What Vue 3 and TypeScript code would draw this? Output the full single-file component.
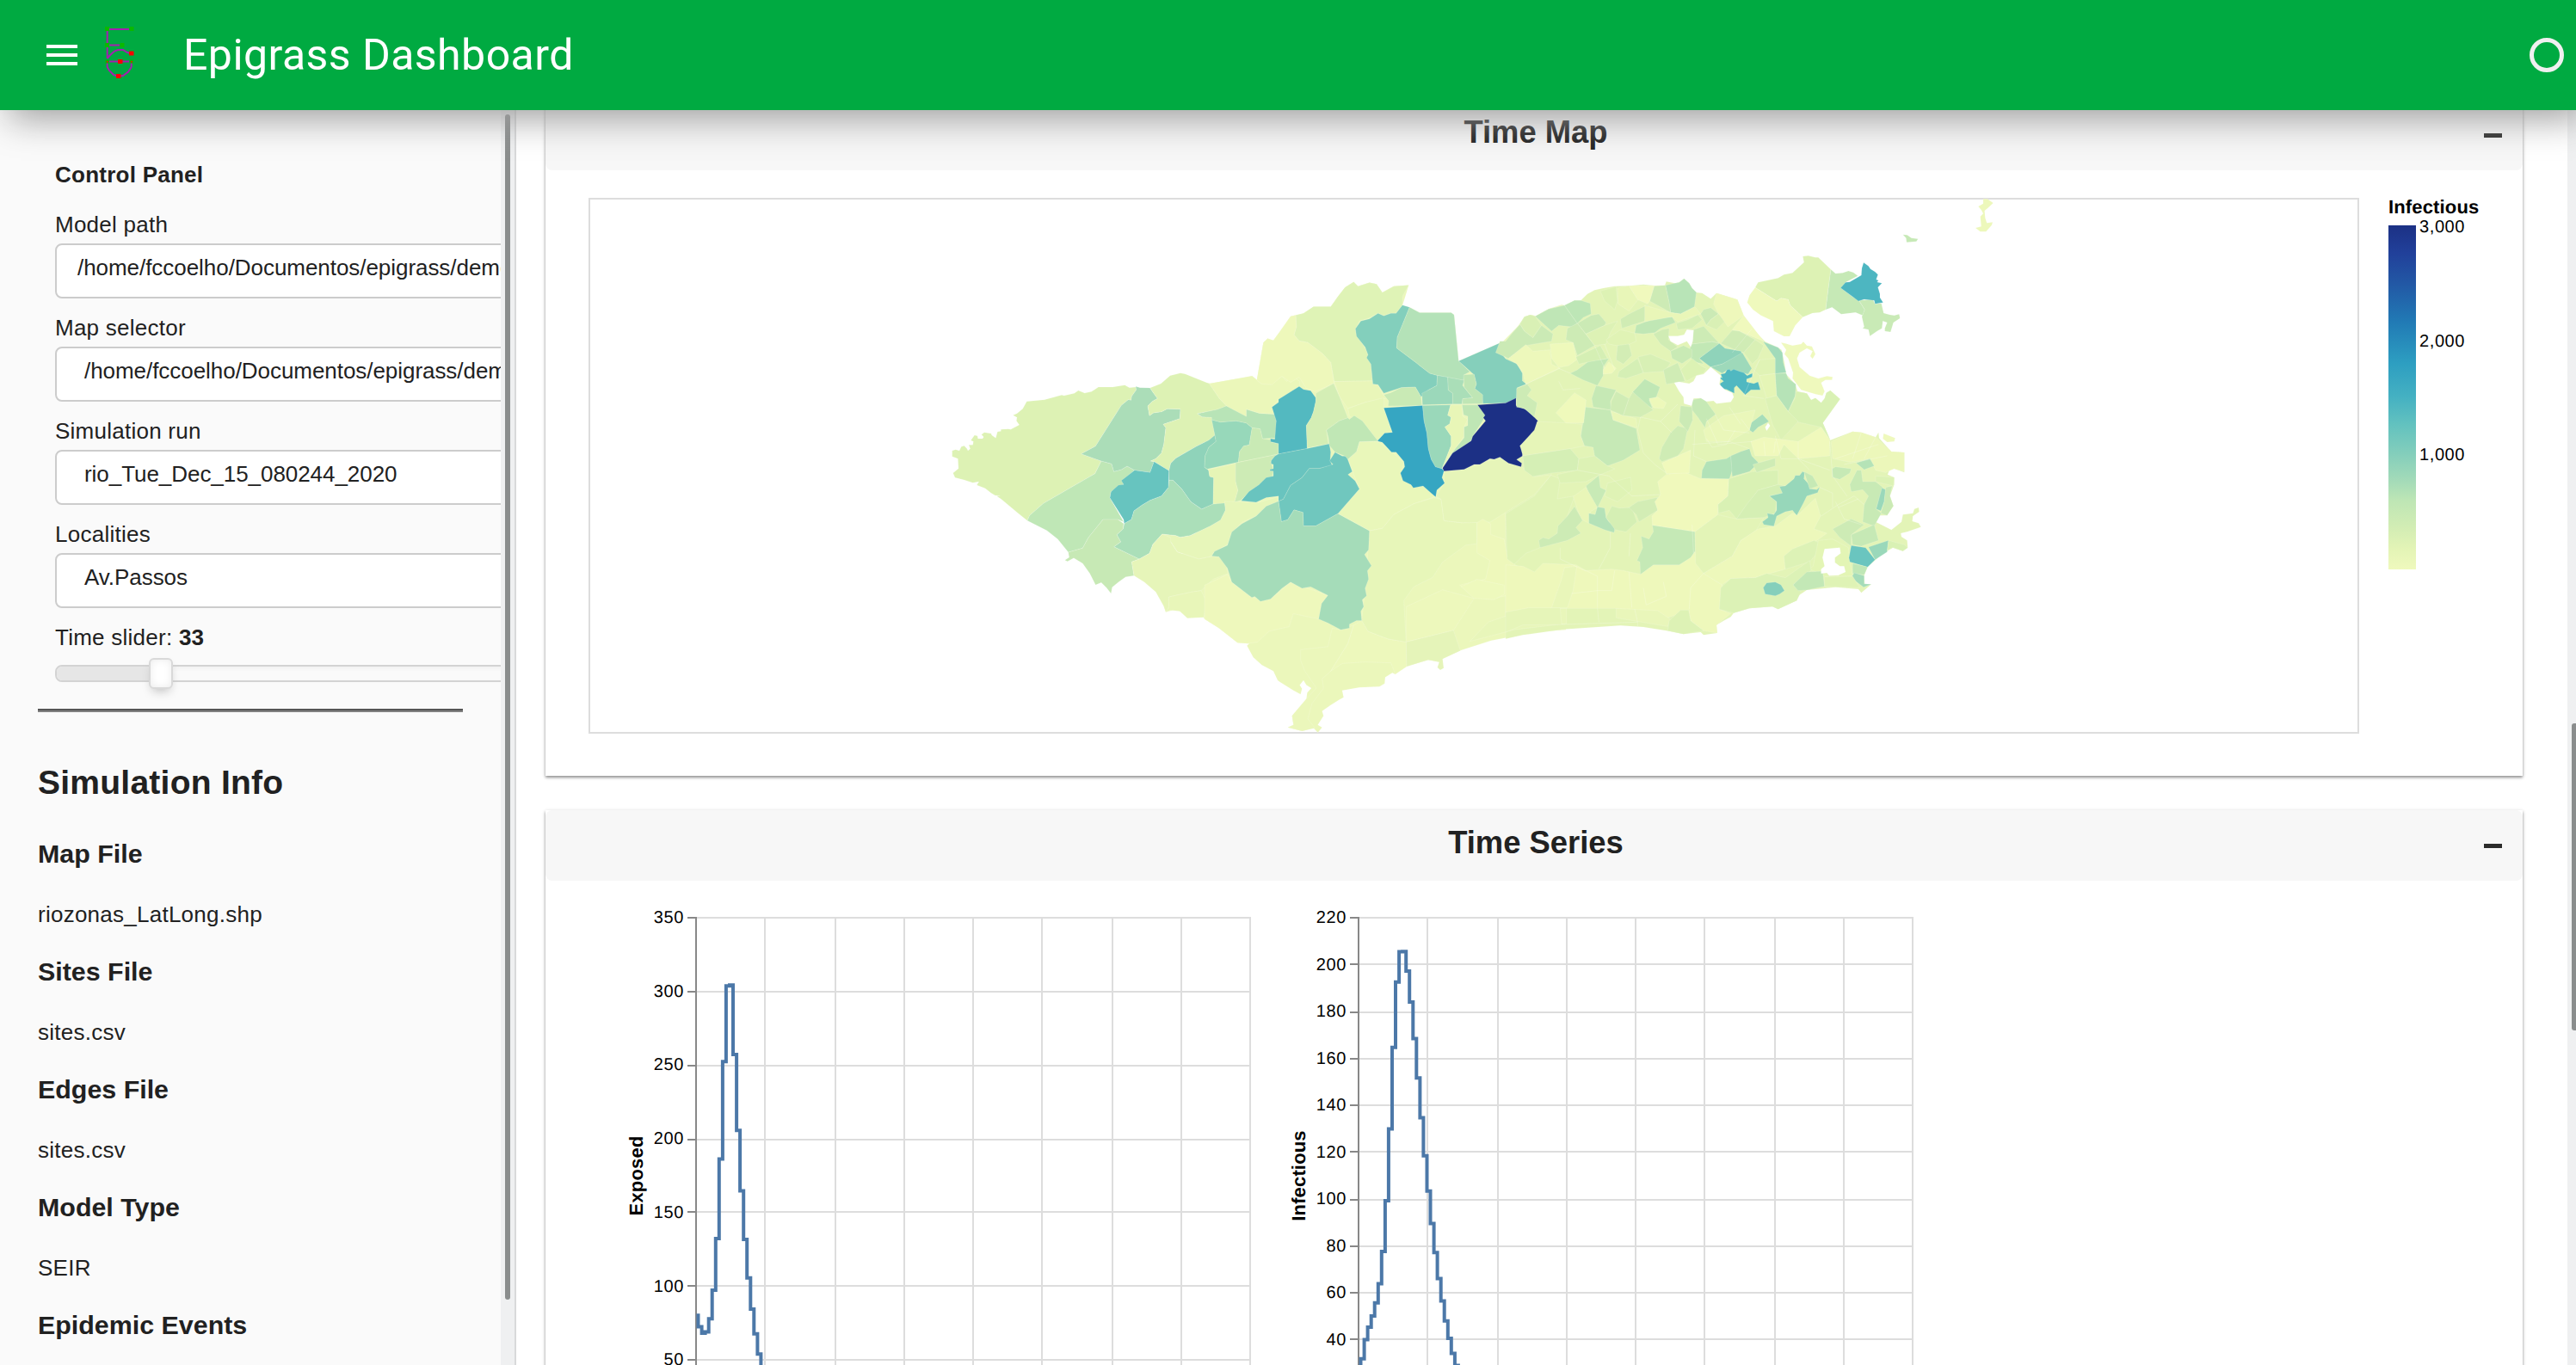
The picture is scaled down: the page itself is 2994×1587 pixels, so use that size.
<script setup lang="ts">
type Region = [string, string]
interface Zone { transform: string; regions: Region[] }
interface Chart { title: string; left: number; max: number; step: number; titleX: number; values: number[] }

const fields = [
  { label: 'Model path', value: '/home/fccoelho/Documentos/epigrass/demos', input: true },
  { label: 'Map selector', value: '/home/fccoelho/Documentos/epigrass/demos', input: false },
  { label: 'Simulation run', value: 'rio_Tue_Dec_15_080244_2020', input: false },
  { label: 'Localities', value: 'Av.Passos', input: false },
]

const info = [
  { title: 'Map File', value: 'riozonas_LatLong.shp' },
  { title: 'Sites File', value: 'sites.csv' },
  { title: 'Edges File', value: 'sites.csv' },
  { title: 'Model Type', value: 'SEIR' },
  { title: 'Epidemic Events', value: '' },
]

const legendTicks = [
  { y: 270, text: '3,000' },
  { y: 402.5, text: '2,000' },
  { y: 535, text: '1,000' },
]

const zones: Zone[] = [
  // coast and lowlands under the districts
  {
    transform: 'translate(1400 300) scale(0.33333 0.35714)',
    regions: [
      ['#ebf7bb', '0,405 20,408 165,385 182,398 205,275 220,262 240,268 262,240 300,190 315,186 345,180 380,158 440,158 465,125 490,95 520,78 535,92 575,80 600,85 620,112 660,92 712,88 700,125 690,155 715,160 750,178 860,178 870,185 886,335 1040,272 1100,215 1140,185 1155,188 1200,165 1245,152 1260,155 1260,1210 1150,1218 1000,1245 890,1278 830,1305 822,1315 780,1308 700,1330 680,1338 665,1355 655,1350 630,1365 628,1385 610,1395 540,1398 480,1408 485,1430 470,1438 440,1455 410,1475 415,1490 395,1520 410,1528 395,1545 380,1530 340,1540 320,1535 290,1528 310,1520 305,1490 355,1435 358,1415 372,1400 355,1390 345,1375 332,1390 340,1402 335,1420 310,1408 262,1380 255,1375 240,1345 200,1325 170,1300 148,1262 155,1255 115,1252 50,1205 0,1175 -5,1168 -60,1171 -95,1143 -135,1152 -142,1134 -100,1000 0,850'],
    ],
  },
  {
    transform: 'translate(1750 300) scale(0.33333)',
    regions: [
      ['#e3f4b7', '0,290 20,265 45,235 65,205 85,198 103,203 150,178 205,165 240,148 262,148 285,125 310,112 340,105 380,98 430,97 480,92 520,96 555,95 560,82 590,88 605,85 622,72 640,88 650,105 665,120 685,122 715,142 735,122 760,130 808,145 830,200 860,245 905,292 950,312 962,320 972,365 978,405 1010,440 1018,465 1050,472 1065,495 1080,488 1100,505 1112,490 1118,470 1132,462 1166,492 1106,575 1132,635 1210,605 1240,608 1290,625 1300,608 1302,628 1345,675 1390,678 1390,748 1355,735 1340,735 1332,755 1355,765 1355,790 1340,830 1352,865 1330,898 1300,898 1290,920 1345,948 1380,920 1385,895 1420,890 1425,875 1440,870 1442,885 1420,900 1418,918 1440,925 1448,938 1400,955 1378,960 1380,972 1400,985 1402,1010 1385,1022 1350,1010 1310,1035 1262,1078 1250,1108 1252,1138 1275,1138 1240,1168 1230,1155 1150,1148 1050,1158 1020,1178 1015,1195 950,1225 930,1216 850,1222 795,1238 785,1252 760,1265 735,1280 738,1308 690,1315 680,1305 620,1312 560,1300 480,1287 400,1282 200,1295 60,1315 0,1328'],
    ],
  },
  // west
  {
    transform: 'translate(1090 300) scale(0.33333)',
    regions: [
      ['#ebf7ba', '946,438 1096,411 1112,424 1125,436 1160,440 1200,412 1215,430 1240,415 1262,430 1262,450 1190,492 1165,518 1176,545 1122,542 1076,528 1076,553 1068,553 1006,516 980,488'],
      ['#ddf2b4', '50,672 62,668 75,672 82,658 92,655 102,665 105,672 113,665 108,652 122,652 124,640 115,636 128,618 138,620 140,630 156,630 160,624 152,616 162,608 186,612 188,618 202,628 208,606 220,604 220,598 245,596 254,598 284,582 274,568 276,556 262,548 276,542 296,526 310,500 372,494 432,478 440,480 476,472 490,462 512,471 536,466 560,450 610,450 652,443 668,452 690,450 692,460 676,482 674,496 664,494 640,514 550,656 500,683 570,708 548,752 368,856 320,898 312,916 280,890 220,840 205,830 217,829 200,828 186,820 165,803 136,792 143,780 122,784 92,774 60,766 53,750 72,734 70,700 50,692'],
      ['#bfe7b6', '312,916 320,898 368,856 548,752 570,708 606,718 614,745 640,738 660,726 686,740 644,776 648,790 604,815 600,836 648,920 628,912 576,912 525,975 505,1012 455,1026 418,980 380,950'],
      ['#abddb8', '500,683 550,656 640,514 664,494 674,496 676,482 692,460 690,448 705,452 740,453 750,468 766,490 748,500 732,516 738,550 752,540 780,536 800,526 846,527 844,560 786,580 795,592 788,650 780,680 760,700 742,708 754,710 740,748 686,740 660,726 640,738 614,745 606,718 570,708'],
      ['#ddf2b4', '740,453 778,438 810,410 846,401 862,404 946,438 980,488 1006,516 975,528 905,543 922,554 955,556 966,618 945,635 900,658 830,698 812,716 806,742 754,710 742,708 760,700 780,680 788,650 795,592 786,580 844,560 846,527 800,526 780,536 752,540 738,550 732,516 748,500 766,490 750,468'],
      ['#67c4bf', '754,710 806,742 804,800 780,830 740,845 712,862 684,882 675,912 650,926 648,912 600,836 604,815 630,792 648,790 640,776 686,740 740,748'],
      ['#8fd3ba', '806,742 812,716 830,698 900,658 945,635 966,618 970,640 945,660 932,690 930,730 944,740 948,762 962,766 960,858 920,876 882,850 850,805 820,775 806,775'],
      ['#abdfb9', '806,775 820,775 850,805 882,850 920,876 960,858 1000,848 1003,880 986,914 950,935 880,968 845,974 830,968 782,963 750,998 738,1030 702,1050 614,1007 638,990 624,965 646,945 650,926 675,912 684,882 712,862 740,845 780,830 804,800'],
      ['#c7e9b5', '455,1026 505,1012 525,975 576,912 628,912 648,926 646,945 624,965 638,990 614,1007 702,1050 676,1060 684,1108 655,1112 630,1130 608,1148 604,1170 588,1150 570,1132 550,1140 530,1100 505,1065 474,1046 452,1058 443,1054 458,1044'],
      ['#97d8ba', '955,564 985,572 1040,568 1075,575 1096,592 1086,652 1066,656 1052,675 1048,712 940,736 930,730 932,690 945,660 970,640 966,618'],
      ['#b8e4b7', '905,543 975,528 1006,516 1076,553 1076,528 1122,542 1176,545 1182,580 1176,628 1132,630 1124,596 1096,592 1075,575 1040,568 985,572 955,564 955,556 922,554'],
      ['#c9eab5', '1096,592 1124,596 1132,630 1160,634 1162,642 1190,648 1188,684 1048,712 1052,675 1066,656 1086,652'],
      ['#cdebb5', '1038,715 1188,684 1175,690 1160,710 1172,742 1165,765 1122,790 1088,815 1056,845 1034,852 1046,810 1038,780'],
      ['#e6f5b6', '944,738 1038,716 1038,780 1046,810 1034,852 960,858 962,766 948,762'],
      ['#e7f6ba', '782,963 830,968 845,974 880,968 950,935 986,914 1003,880 1000,848 1120,852 1188,832 1188,850 1145,866 1110,900 1060,922 1025,960 1012,998 960,1028 958,1040 910,1050 835,1025 812,990'],
      ['#e6f5b9', '782,963 812,975 812,990 835,1025 910,1050 958,1040 985,1042 1005,1070 1012,1100 960,1120 918,1160 885,1165 805,1182 806,1218 795,1235 788,1215 760,1165 720,1130 684,1108 676,1060 702,1050 738,1030 750,998'],
      ['#e8f6b9', '805,1182 885,1165 918,1160 935,1195 928,1253 870,1256 845,1232 810,1228 795,1235 806,1218'],
    ],
  },
  // centre
  {
    transform: 'translate(1400 300) scale(0.33333 0.35714)',
    regions: [
      ['#eef8bc', '0,1065 80,1030 95,1055 165,1105 230,1110 300,1055 430,1098 398,1175 310,1158 295,1200 225,1215 185,1250 150,1255 115,1252 50,1205 0,1175'],
      ['#ebf7bb', '335,1275 430,1265 445,1205 475,1210 520,1195 500,1255 440,1345 410,1370 415,1400 375,1450 360,1500 385,1530 340,1540 290,1528 310,1520 305,1490 355,1435 390,1400 350,1345 335,1310'],
      ['#edf8bc', '520,1195 548,1180 570,1215 640,1240 703,1250 705,1330 665,1355 650,1318 560,1315 480,1320 440,1345 500,1255'],
      ['#dff3b6', '318,186 345,180 380,158 440,158 465,125 490,95 520,78 535,92 575,80 600,85 620,112 660,92 712,88 690,125 690,153 668,180 650,180 625,188 605,180 575,195 540,205 526,235 545,270 565,300 580,345 587,400 452,402 440,340 410,310 360,275 330,270 312,250 320,225'],
      ['#eef8bb', '182,398 205,275 220,262 240,268 262,240 300,190 318,186 320,225 312,250 330,270 360,275 410,310 440,340 452,408 385,435 355,425 330,388 300,405 270,385 235,412 200,410'],
      ['#e9f6b9', '452,402 587,400 587,410 605,412 622,445 640,455 560,470 500,490 470,450'],
      ['#e7f6b8', '500,490 560,470 625,455 625,488 655,568 628,570 602,596 575,560 540,530 505,515'],
      ['#e9f7ba', '500,655 530,630 540,598 602,596 652,630 695,665 685,705 728,745 762,742 806,776 730,800 660,835 620,880 575,888 465,832 540,752'],
      ['#e7f6b9', '575,888 620,880 660,835 730,800 800,780 825,785 835,855 900,862 950,855 950,930 910,935 830,990 795,1040 730,1070 695,1115 703,1250 640,1240 570,1215 548,1180 560,1075'],
      ['#e6f5b9', '835,694 905,688 960,668 1030,648 1104,678 1150,712 1210,705 1150,770 995,860 900,862 835,855 825,785 806,776 835,735'],
      ['#83cfbc', '690,153 715,160 672,258 670,293 740,342 750,350 785,375 812,382 810,415 780,430 755,452 735,420 685,422 625,440 605,412 587,410 580,345 565,325 570,315 560,290 530,255 526,230 545,205 575,198 605,180 625,188 650,180 668,180'],
      ['#b4e2b8', '715,160 750,178 860,178 870,185 886,335 925,370 905,380 903,398 812,382 785,375 750,350 740,342 670,293 672,258'],
      ['#85cfbb', '886,335 1040,272 1030,305 1050,328 1090,345 1108,375 1108,400 1122,410 1090,422 1088,458 1050,472 970,474 968,445 942,425 948,410 940,380'],
      ['#9bd8ba', '812,382 848,388 850,430 865,440 865,475 760,478 758,440 780,430 810,415'],
      ['#aadeb8', '848,388 905,398 900,415 935,455 900,458 898,475 865,475 865,440 850,430'],
      ['#bfe6b5', '903,380 940,378 948,410 942,425 970,445 970,474 900,475 900,458 935,455 905,420'],
      ['#c9eab5', '625,445 650,438 685,422 735,420 755,452 758,480 640,482 642,465'],
      ['#9ad8ba', '760,480 858,478 848,512 860,518 855,540 838,550 860,580 860,610 828,686 805,680 790,655 780,620 775,570 765,530'],
      ['#e8f6b7', '858,478 898,478 900,515 918,525 905,550 905,580 870,625 828,686 860,610 860,580 838,550 855,540 860,518 848,512'],
      ['#bfe6b5', '898,478 952,478 980,510 970,530 935,580 930,595 870,635 828,686 870,625 905,585 905,550 918,545 918,515 903,510'],
      ['#36a6c2', '625,488 760,480 765,530 775,570 780,620 790,655 805,680 828,686 835,692 828,715 837,733 810,755 806,778 790,765 762,742 728,748 720,738 692,725 683,700 698,680 695,662 668,632 652,632 620,600 602,596 628,570 655,568'],
      ['#1c3085', '952,478 1050,472 1086,456 1086,480 1125,495 1162,530 1155,560 1130,590 1100,612 1112,630 1108,645 1088,656 1106,668 1104,680 1060,668 1030,648 1010,655 995,653 960,672 940,672 905,688 835,694 830,684 865,635 930,595 935,580 980,530 972,520 978,512'],
      ['#53b9c0', '330,418 345,428 370,432 388,455 388,468 380,500 372,520 355,545 358,620 258,638 258,604 230,598 230,588 245,590 250,530 235,485 258,470 258,460'],
      ['#d4eeb5', '388,440 450,408 470,450 500,520 470,530 425,560 432,605 358,618 355,545 372,520 380,500 388,465'],
      ['#69c4bf', '258,638 358,620 435,605 440,632 438,660 445,675 400,685 365,685 340,715 300,740 275,785 258,792 258,775 215,780 180,795 128,790 155,760 190,738 215,715 240,710 240,694 228,692 228,688 240,686 240,672 232,670 232,660 245,645'],
      ['#70c7be', '275,785 300,740 340,715 365,685 400,685 448,672 436,660 455,632 480,645 495,645 515,695 500,705 525,725 540,752 465,832 388,872 345,872 343,828 312,820 290,852 268,858 258,792'],
      ['#c0e7b5', '425,560 470,530 500,520 505,525 522,513 550,530 605,596 540,598 530,630 500,655 490,645 455,632 435,610 432,585'],
      ['#a5dcb9', '258,792 268,858 290,852 312,820 343,828 345,872 388,872 465,832 575,888 572,950 558,965 582,1002 568,1018 572,1045 560,1075 565,1100 550,1112 555,1135 545,1150 548,1180 530,1180 505,1192 505,1205 475,1210 430,1188 398,1175 408,1125 430,1098 370,1070 340,1075 300,1055 270,1075 230,1110 195,1118 175,1102 165,1105 95,1055 80,1010 50,972 25,970 35,955 80,935 95,892 130,865 180,840 215,808'],
      ['#eef8bb', '950,862 970,850 998,865 998,900 1045,915 1055,970 1085,1000 1148,1025 1085,1092 1000,1110 940,1105 890,1065 980,1045 995,985 950,960'],
      ['#edf8bc', '703,1135 830,1080 940,1108 868,1212 703,1250'],
      ['#e5f4b9', '703,1250 868,1212 892,1278 830,1305 834,1335 822,1341 812,1333 818,1315 780,1308 705,1330'],
      ['#e8f6ba', '925,1248 990,1185 1130,1140 1262,1140 1262,1190 1080,1210'],
      ['#eef9bd', '895,1070 950,1046 1045,1065 1045,1095 1010,1112 940,1108'],
    ],
  },
  // east
  {
    transform: 'translate(1750 300) scale(0.33333)',
    regions: [
      ['#e0f3b6', '0,892 100,830 158,758 190,770 180,840 240,830 215,900 180,960 120,1010 70,1030 30,1068 5,1050'],
      ['#e6f5b8', '110,570 215,575 268,580 262,620 275,655 225,665 60,690 50,655 100,600'],
      ['#eef8bb', '0,1070 60,1075 100,1095 130,1065 245,1070 280,1090 370,1085 410,1090 470,1103 515,1070 605,1070 660,1025 690,1100 755,1140 745,1225 785,1240 735,1280 738,1308 690,1300 645,1265 638,1228 565,1255 380,1222 180,1222 0,1240'],
      ['#e6f5b9', '0,1235 80,1220 190,1220 195,1278 60,1280 0,1305'],
      ['#e9f6ba', '160,1220 195,1120 205,1080 248,1075 235,1160 215,1220'],
      ['#e9f6ba', '385,1222 530,1230 575,1260 565,1285 385,1255'],
      ['#bfe6b6', '103,203 150,178 205,165 250,228 230,240 185,235 160,255'],
      ['#bde6b6', '205,165 240,148 262,148 295,158 298,195 270,208 250,228'],
      ['#d9f0b5', '50,230 65,205 85,198 103,203 125,235 95,278 65,255'],
      ['#cbeab5', '-20,290 0,290 20,265 50,232 65,255 95,278 125,235 165,265 160,290 100,300 70,305 10,350 -35,330'],
      ['#cbeab5', '250,228 298,200 325,195 350,225 345,235 280,265'],
      ['#cdebb5', '215,245 250,228 310,305 250,340 235,295 210,285'],
      ['#edf8bb', '10,350 70,302 95,325 155,320 160,370 190,385 70,440 60,400 35,365'],
      ['#eef9bb', '155,300 235,295 248,355 220,375 185,382 160,350'],
      ['#ddf2b5', '280,265 345,235 390,220 365,260 350,300 310,305'],
      ['#e0f3b5', '350,285 400,250 450,262 455,290 410,310 360,300'],
      ['#ddf2b4', '330,115 385,100 390,150 380,180 345,150'],
      ['#e8f6b8', '390,105 430,97 462,145 430,185 392,160'],
      ['#d0ecb4', '400,213 430,195 495,163 485,220 405,245'],
      ['#c0e7b5', '450,262 455,235 520,210 580,205 592,225 540,245 520,260 480,265'],
      ['#b8e4b7', '557,95 590,88 605,85 622,72 640,88 650,105 665,120 658,170 610,195 575,190 570,155'],
      ['#cdebb5', '518,98 557,95 570,155 575,190 502,150'],
      ['#f0f9bd', '430,97 518,96 502,150 495,160 460,145'],
      ['#e9f6b8', '485,165 575,190 610,195 660,170 680,195 600,222 580,205 485,222'],
      ['#d0ecb4', '515,265 545,250 570,245 568,285 600,310 575,325 540,300'],
      ['#cdebb5', '655,250 690,238 745,298 720,292 650,300'],
      ['#c2e8b5', '640,320 650,300 720,292 745,298 675,350 690,370 650,360'],
      ['#d5efb5', '595,228 635,215 670,198 685,215 650,245 600,250'],
      ['#cbeab5', '680,195 690,180 715,173 742,195 715,215 700,235'],
      ['#d9f0b5', '742,195 770,215 735,250 700,235 715,215'],
      ['#eef8bb', '735,122 760,130 808,145 830,200 775,240 740,190 725,160'],
      ['#f0f9bd', '790,250 830,200 900,290 815,255'],
      ['#d0ecb5', '750,298 790,252 815,255 870,285 830,330 800,320'],
      ['#d9f0b5', '830,330 870,285 900,305 880,350 860,370'],
      ['#8fd3ba', '675,350 745,298 765,315 820,325 825,335 755,370 715,380'],
      ['#9ed9ba', '715,380 755,370 825,330 858,385 845,405 800,395 770,392 755,402'],
      ['#e0f3b5', '865,390 885,355 940,350 940,403 885,410'],
      ['#e5f5b6', '885,410 940,403 945,480 910,490'],
      ['#50b8c1', '742,415 755,418 750,405 765,402 772,390 780,388 785,394 795,388 815,395 830,400 842,410 860,402 860,415 840,422 840,432 865,438 880,432 888,460 855,460 835,477 805,445 797,452 797,472 770,458 748,455 748,437 760,430'],
      ['#a2dbba', '898,292 950,312 965,330 968,365 978,400 940,403 940,350'],
      ['#b6e3b7', '940,403 978,402 985,420 1012,440 1010,480 985,535 945,480'],
      ['#d9f1b4', '1012,465 1050,472 1065,495 1080,488 1100,505 1112,490 1118,470 1132,462 1166,492 1106,575 1132,635 1100,590 1010,570 985,535 1008,490'],
      ['#ddf2b5', '905,490 945,480 985,535 1020,570 960,635 930,580'],
      ['#a7ddb9', '850,600 855,575 895,545 918,570 880,590 862,608'],
      ['#c6e9b5', '648,495 690,487 732,545 700,570 695,592 670,555 650,530'],
      ['#c6e9b6', '278,520 365,530 375,565 455,595 468,670 410,705 355,725 310,690 305,660 275,655 262,620'],
      ['#e9f6b8', '368,535 455,560 458,592 375,565'],
      ['#c6e9b5', '300,490 315,445 385,460 365,500 368,530 305,520'],
      ['#d0ecb5', '365,530 368,500 385,465 430,490 410,550'],
      ['#c0e7b5', '443,467 485,422 538,450 525,485 500,495 512,525 470,500'],
      ['#d3edb5', '430,490 443,467 515,530 470,555 410,550'],
      ['#c3e8b5', '225,402 250,390 290,360 360,350 340,380 340,410 320,445 270,425'],
      ['#d5efb4', '245,345 330,305 355,350 290,362 255,370'],
      ['#f0f9bb', '340,390 360,362 385,385 370,402 340,405'],
      ['#d3edb5', '390,305 430,300 440,340 410,370 385,355'],
      ['#d5efb5', '395,395 460,350 480,400 420,420 390,415'],
      ['#d8f0b5', '462,345 505,335 575,365 555,395 480,400'],
      ['#cdebb5', '38,455 75,440 90,460 75,480 110,505 100,555 65,525 38,520'],
      ['#eff9bb', '175,540 240,470 280,495 278,520 272,575 210,575'],
      ['#edf8ba', '500,490 530,485 560,505 550,525 515,522'],
      ['#d5efb5', '60,690 225,665 255,700 250,740 160,750 95,762 65,740'],
      ['#ddf2b5', '255,700 310,690 355,725 380,735 325,758 280,780 190,785 180,755 250,740'],
      ['#dff3b5', '355,785 435,765 440,810 390,850 345,830'],
      ['#c8eab6', '280,795 325,758 330,800 350,810 320,872 300,850'],
      ['#e9f6b8', '235,832 280,800 320,870 295,885 290,925 262,910'],
      ['#b5e2b8', '290,890 312,895 320,868 345,872 350,905 360,920 382,935 378,958 345,948 290,925'],
      ['#cdebb5', '115,985 130,975 150,980 180,960 182,935 215,900 240,866 268,915 245,940 262,960 215,985 120,1010'],
      ['#d5efb4', '350,905 370,865 395,872 440,870 458,920 420,955 382,948'],
      ['#d3edb5', '430,870 460,850 530,835 530,880 465,920 455,895'],
      ['#f0f9bc', '530,780 560,755 620,745 680,770 778,770 775,830 740,860 740,895 660,955 512,932 510,900 530,880 520,850 540,825'],
      ['#c5e9b6', '512,932 660,955 662,1020 645,1045 605,1070 515,1070 470,1103 468,1060 458,1055 478,1010 472,970 500,980 515,955'],
      ['#e3f4b7', '660,955 740,895 805,910 900,905 870,955 820,985 790,1040 690,1100 662,1065'],
      ['#b2e2b8', '683,768 685,740 700,710 770,700 785,690 790,740 780,770'],
      ['#b0e0b8', '785,690 820,675 850,665 858,690 882,715 850,745 790,762'],
      ['#d9f1b4', '778,770 860,745 950,740 950,790 880,810 805,910 780,880 742,890 740,860 775,830'],
      ['#d5efb4', '880,810 950,790 975,795 965,820 920,830 945,850 940,890 900,905 805,910 840,860'],
      ['#cfecb5', '862,720 940,698 940,725 875,748'],
      ['#edf8bb', '690,1100 790,1040 820,985 880,945 940,935 1000,890 1020,895 1080,838 1098,900 1075,945 1120,960 1050,1010 980,1035 975,1085 905,1105 870,1115 785,1118 755,1140'],
      ['#ddf2b6', '970,1040 1000,1015 1075,985 1110,1000 1060,1060 975,1085'],
      ['#97d7ba', '955,797 975,795 1005,770 1010,758 1025,758 1035,745 1042,748 1040,770 1058,790 1060,805 1085,808 1095,798 1088,818 1050,830 1038,855 1015,898 1000,880 975,885 945,900 935,935 900,930 895,920 915,905 912,890 935,895 945,880 945,850 920,830 965,820'],
      ['#c6e9b5', '1040,745 1070,760 1090,795 1060,805'],
      ['#f0f9bc', '855,640 900,625 1020,640 1100,590 1130,635 1130,690 1020,700 970,650 950,690 870,690'],
      ['#eaf7ba', '690,600 760,550 870,530 850,600 780,640 700,640'],
      ['#f0f9bc', '545,715 600,690 645,670 640,750 560,752'],
      ['#cfecb5', '535,700 545,660 575,610 600,585 635,595 620,665 600,690 545,710'],
      ['#cbeab5', '605,570 610,515 650,520 652,565 635,605'],
      ['#c9eab5', '575,325 620,305 650,320 650,345 615,368 580,350'],
      ['#dcf2b4', '610,390 650,350 680,375 700,385 690,402 665,410 630,430'],
      ['#d0ecb5', '550,390 600,365 610,390 625,430 560,440'],
      ['#ecf7ba', '1135,640 1210,605 1240,608 1290,625 1345,675 1390,678 1390,745 1355,735 1325,748 1290,740 1270,700 1200,712 1140,700'],
      ['#c6e9b5', '1138,735 1150,728 1205,735 1200,750 1165,772 1140,765'],
      ['#b5e3b7', '1222,715 1270,700 1285,725 1250,738'],
      ['#c8eab5', '1200,790 1225,740 1240,740 1245,780 1290,780 1315,800 1292,875 1310,890 1285,935 1245,920 1250,860 1265,830 1245,808 1205,815'],
      ['#9ad8ba', '1312,802 1325,808 1320,850 1308,882 1292,875'],
      ['#cbeab5', '1325,800 1348,795 1340,830 1352,865 1330,898 1308,890 1320,850'],
      ['#dcf2b5', '1290,760 1355,765 1352,795 1290,780'],
      ['#c6e9b5', '1205,965 1285,930 1300,985 1240,1005 1210,1000'],
      ['#cdebb5', '1140,945 1205,910 1250,930 1205,965 1205,1005 1165,975'],
      ['#e3f5b5', '1072,1075 1090,985 1140,980 1195,1010 1200,1060 1210,1110 1112,1110 1060,1085'],
      ['#6ac5bf', '1205,1003 1255,1010 1288,1052 1262,1078 1200,1060 1197,1045'],
      ['#9ad8ba', '1265,1008 1335,985 1330,1025 1288,1052'],
      ['#d9f1b4', '1335,985 1390,1000 1402,1010 1385,1022 1350,1010 1330,1020'],
      ['#bfe7b6', '1210,1065 1262,1078 1250,1105 1210,1100'],
      ['#a5dcb9', '1205,1115 1215,1098 1250,1108 1250,1136 1275,1138 1248,1148'],
      ['#dcf2b6', '745,1225 750,1150 785,1118 870,1115 910,1100 975,1115 1060,1055 1065,1090 1002,1140 1030,1165 1015,1195 950,1225 930,1216 850,1222 795,1238'],
      ['#85cfbb', '898,1150 910,1133 940,1130 960,1140 972,1160 955,1172 940,1178 905,1172'],
      ['#c3e8b6', '1002,1140 1050,1095 1105,1092 1112,1145 1050,1158 1020,1160'],
      ['#dff3b5', '1112,1112 1210,1110 1235,1150 1112,1145'],
      ['#ddf2b5', '570,1265 610,1228 638,1228 645,1265 690,1300 620,1312 565,1300'],
      ['#eff9bd', '1318,612 1358,628 1355,640 1330,642 1315,630'],
      ['#ffffff', '568,272 600,272 622,268 632,250 655,252 652,290 645,310 632,290 600,304 575,290'],
      ['#ffffff', '588,435 605,432 640,438 655,430 665,410 690,405 715,380 750,410 745,440 765,460 790,470 795,485 785,502 735,508 725,498 700,500 680,488 655,490 648,515 622,508 620,485 605,465'],
      ['#ffffff', '1112,1015 1165,1010 1168,1030 1148,1045 1148,1062 1165,1075 1180,1075 1185,1095 1160,1106 1128,1108 1120,1098 1100,1100 1100,1085 1112,1075 1105,1045'],
      ['#ffffff', '905,590 915,575 922,585 910,602'],
    ],
  },
  // islands in the bay
  {
    transform: 'translate(1950 210) scale(0.33333)',
    regions: [
      ['#ddf2b4', '436,264 455,262 480,268 490,268 534,310 524,385 516,450 495,460 470,462 436,476 392,435 385,415 360,410 345,420 310,398 270,373 280,355 350,340 370,328 400,322 440,285'],
      ['#eff9bd', '270,373 310,398 345,420 360,410 385,415 392,435 436,476 410,505 390,543 370,543 335,525 332,490 290,470 262,450 242,425 250,400'],
      ['#c6e9b6', '534,310 550,324 575,322 595,315 612,320 628,332 585,355 570,375 610,405 632,418 652,450 645,470 620,460 570,466 538,442 516,450 524,385'],
      ['#c9eab6', '632,418 680,414 688,430 710,428 718,462 740,468 755,470 772,466 775,480 752,495 742,528 722,525 722,515 730,495 715,490 712,515 695,525 670,542 665,520 645,515 650,510 642,475 652,450'],
      ['#4db6c1', '648,286 665,298 672,308 688,318 698,328 692,345 700,348 695,354 712,358 698,372 705,395 705,408 716,425 688,430 685,418 650,414 630,420 610,405 568,374 585,355 600,353 640,330 642,305'],
      ['#c6e9b6', '785,188 800,190 815,200 838,203 832,212 798,215 796,200'],
      ['#edf8bb', '1048,90 1065,80 1065,64 1080,64 1100,78 1085,92 1070,105 1072,130 1078,148 1098,145 1095,155 1075,178 1055,178 1038,165 1058,160 1055,125 1065,115 1058,102'],
      ['#eff9bd', '360,565 375,568 400,575 430,570 438,562 450,575 468,578 480,605 470,622 462,612 470,595 450,585 425,600 416,620 425,650 460,680 490,690 520,682 540,685 538,695 515,695 500,705 512,735 505,750 480,745 430,730 400,690 402,670 385,620 372,605 378,590'],
    ],
  },
]

// thin neighbourhood limits inside the eastern districts
const limits = [
  '250,740 360,760 440,830 540,825', '470,555 460,600 480,680 520,720 560,750', '540,570 580,610', '600,510 540,570 470,555',
  '700,560 740,650 860,640', '650,650 780,640 850,665', '730,545 760,600 850,610', '780,520 820,580', '660,600 655,690 700,710',
  '940,620 960,700 1020,700 1130,740', '1020,640 1020,700 1060,740', '1130,640 1140,760 1190,830', '1150,700 1300,650', '1180,720 1330,690',
  '1240,608 1210,700', '1290,625 1250,700', '1100,900 1160,860 1215,830 1250,860', '1150,850 1180,910 1240,930', '1095,800 1140,820 1140,870',
  '280,1090 320,1110 320,1220', '380,1090 370,1160 320,1160 230,1170', '430,1095 440,1220', '480,1150 490,1210 560,1180 550,1130', '640,1225 645,1150 690,1100',
  '195,1278 460,1270 460,1285', '320,1222 325,1270', '450,1225 460,1270', '185,430 200,460 260,455', '70,440 185,385 225,402',
  '190,1010 190,1050 280,1092', '365,955 365,1010 325,1085', '435,960 430,1040', '860,245 790,330', '885,355 830,480 900,490', '650,930 655,1030',
  '700,630 720,660 770,650 800,600', '820,560 850,600', '900,640 905,690', '940,640 935,680', '1160,870 1230,840', '345,300 380,390', '310,305 345,385',
]

const charts: Chart[] = [
  {
    title: 'Exposed', left: 809, max: 350, step: 50, titleX: 747,
    values: [80.3, 72.6, 68.2, 69.1, 78, 97.5, 132.5, 186.3, 252.4, 303.8, 304.4, 257.2, 205.8, 164.8, 131.8, 105.7, 84.6, 67.8, 54.1, 43, 30],
  },
  {
    title: 'Infectious', left: 1579, max: 220, step: 20, titleX: 1517,
    values: [20, 32, 40.1, 45.5, 50.2, 55.8, 64, 77.7, 99.4, 130, 164.7, 192.6, 205.5, 205.6, 197.3, 184.1, 168.5, 151.7, 134.7, 118.5, 103.5, 89.6, 77.3, 66.2, 56.6, 48.1, 40.7, 34.3, 29.1, 24],
  },
]
const columns = [80, 162, 242, 322, 402, 484, 564, 644]

const yOf = (c: Chart, v: number): number => 1067 + (600 * (c.max - v)) / c.max
const snap = (y: number): number => Math.round((y - 1) / 2) * 2 + 1
const rows = (c: Chart): number[] => {
  const out: number[] = []
  for (let v = c.max; yOf(c, v) < 1600; v -= c.step) out.push(v)
  return out
}
const stepPath = (c: Chart): string => {
  const w = 4.05
  let d = ''
  c.values.forEach((v, k) => {
    const x0 = c.left + 0.5 + (k === 0 ? 0 : (k - 0.5) * w)
    const x1 = c.left + 0.5 + (k + 0.5) * w
    const y = yOf(c, v).toFixed(1)
    d += `${k === 0 ? 'M' : 'L'}${x0.toFixed(1)} ${y}H${x1.toFixed(1)}`
  })
  return d
}
</script>

<template>
  <div class="page">
    <header class="bar">
      <svg class="menu" width="48" height="48" viewBox="0 0 24 24"><path d="M3 18h18v-2H3v2zm0-5h18v-2H3v2zm0-7v2h18V6H3z" fill="#fff" /></svg>
      <svg class="logo" width="40" height="70" viewBox="116 28 40 70">
        <g fill="none" stroke="#a51fb0" stroke-width="2">
          <path d="M127 34H150M124.7 36V68M127 52.5H139M127 71.500H150" />
          <path d="M124.700 68L128 64L133 59.500L137 58H143L148 61L152 62M124.700 73V78L127 82L132 87L137 88.500L143 88L149 83.500L152.700 78V73" />
        </g>
        <g fill="#0bb800"><path d="M122 31h5v5h-5zM150.500 31h5v5h-5zM122 50h5v5h-5zM139.500 50h5v5h-5zM122.500 69.500h4v4h-4zM151 69.500h4v4h-4z" /></g>
        <g fill="#fe0000"><path d="M150 59.500h5.500v5h-5.500zM137 69h5.500v5h-5.500zM135 86h5.500v5h-5.500zM124 71h1.500v1.500h-1.500zM152.200 71h1.500v1.500h-1.500z" /></g>
      </svg>
      <div class="brand">Epigrass Dashboard</div>
      <div class="busy"></div>
    </header>

    <div class="body">
      <aside class="side">
        <div class="panel">
          <div class="heading">Control Panel</div>
          <div v-for="f in fields" :key="f.label" class="field">
            <div class="label">{{ f.label }}</div>
            <div class="box" :class="{ input: f.input }">{{ f.value }}</div>
          </div>
          <div class="label">Time slider: <b>33</b></div>
          <div class="track"><div class="done"></div><div class="knob"></div></div>
        </div>
        <div class="rule"></div>
        <h2>Simulation Info</h2>
        <template v-for="i in info" :key="i.title">
          <h3>{{ i.title }}</h3>
          <p>{{ i.value }}</p>
        </template>
      </aside>
      <div class="gutter"><div class="thumb"></div></div>

      <main class="main">
        <section class="card map-card">
          <div class="card-head"><span class="title">Time Map</span><i class="minus"></i></div>
          <svg class="map" width="2298" height="704" viewBox="634 198 2298 704">
            <rect x="685" y="231" width="2056" height="621" fill="#fff" stroke="#ddd" stroke-width="2" />
            <g v-for="(z, zi) in zones" :key="zi" :transform="z.transform">
              <polygon v-for="(r, ri) in z.regions" :key="ri" :points="r[1]" :fill="r[0]" class="region" />
            </g>
            <g transform="translate(1750 300) scale(0.33333)" class="limits">
              <polyline v-for="l in limits" :key="l" :points="l" />
            </g>
            <defs>
              <linearGradient id="ramp" x1="0" y1="0" x2="0" y2="1">
                <stop offset="0" stop-color="#1c3185" />
                <stop offset="0.08" stop-color="#21409a" />
                <stop offset="0.17" stop-color="#2258a5" />
                <stop offset="0.28" stop-color="#217ab5" />
                <stop offset="0.4" stop-color="#2d9ec1" />
                <stop offset="0.5" stop-color="#45b1c2" />
                <stop offset="0.58" stop-color="#63c2bf" />
                <stop offset="0.67" stop-color="#86cfbb" />
                <stop offset="0.75" stop-color="#a7dcb8" />
                <stop offset="0.8" stop-color="#bee6b5" />
                <stop offset="0.88" stop-color="#d3edb4" />
                <stop offset="0.94" stop-color="#e3f4b6" />
                <stop offset="1" stop-color="#eff9bd" />
              </linearGradient>
            </defs>
            <text x="2776" y="248" class="axis-title">Infectious</text>
            <rect x="2776" y="262" width="32" height="400" fill="url(#ramp)" />
            <text v-for="t in legendTicks" :key="t.text" x="2812" :y="t.y" class="tick">{{ t.text }}</text>
          </svg>
        </section>

        <section class="card series-card">
          <div class="card-head"><span class="title">Time Series</span><i class="minus"></i></div>
          <div class="charts">
            <svg v-for="c in charts" :key="c.title" width="760" height="547" :viewBox="`${c.left - 89} 1040 760 547`">
              <g stroke="#ddd" stroke-width="2">
                <line v-for="x in columns" :key="x" :x1="c.left + x" :x2="c.left + x" y1="1066" y2="1667" />
                <line v-for="v in rows(c)" :key="v" :x1="c.left" :x2="c.left + 645" :y1="snap(yOf(c, v))" :y2="snap(yOf(c, v))" />
              </g>
              <g stroke="#888" stroke-width="2">
                <line :x1="c.left" :x2="c.left" y1="1066" y2="1667" />
                <line v-for="v in rows(c)" :key="v" :x1="c.left - 10" :x2="c.left" :y1="snap(yOf(c, v))" :y2="snap(yOf(c, v))" />
              </g>
              <text v-for="v in rows(c)" :key="v" :x="c.left - 14" :y="yOf(c, v) + 6" text-anchor="end" class="tick">{{ v }}</text>
              <path :d="stepPath(c)" fill="none" stroke="#4c78a8" stroke-width="4" />
              <text text-anchor="middle" class="axis-title" :transform="`translate(${c.titleX} 1367) rotate(-90)`">{{ c.title }}</text>
            </svg>
          </div>
        </section>
      </main>
      <div class="page-scroll"><div class="page-thumb"></div></div>
    </div>
  </div>
</template>

<style>
html,
body {
  margin: 0;
  overflow: hidden;
  background: #fff;
}
</style>

<style scoped>
.page {
  width: 2994px;
  height: 1587px;
  overflow: hidden;
  display: flex;
  flex-direction: column;
  font-family: "Liberation Sans", Arial, sans-serif;
  font-size: 26px;
  line-height: 30px;
  color: #212121;
}
.bar {
  position: relative;
  z-index: 2;
  flex: none;
  height: 128px;
  display: flex;
  align-items: center;
  background: #00aa41;
  box-shadow: 10px 10px 40px #9e9e9e;
}
.menu { margin: 0 20px 0 48px; }
.logo { margin-top: -2px; }
.brand {
  margin-left: 57px;
  font-family: Roboto, sans-serif;
  font-size: 50px;
  line-height: 64px;
  letter-spacing: 0.45px;
  color: #fff;
  white-space: nowrap;
}
.busy {
  box-sizing: border-box;
  width: 40px;
  height: 40px;
  margin-left: auto;
  margin-right: 14px;
  border: 5px solid #f0f0f0;
  border-radius: 50%;
}
.body {
  flex: 1;
  min-height: 0;
  display: flex;
}
.side {
  flex: none;
  box-sizing: border-box;
  width: 582px;
  padding: 60px 0 0 44px;
  overflow: hidden;
  background: #fafafa;
  letter-spacing: 0.25px;
  white-space: nowrap;
}
.panel { padding-left: 20px; }
.heading {
  font-weight: bold;
  margin-bottom: 28px;
}
.field { margin-bottom: 19px; }
.box {
  box-sizing: border-box;
  width: 600px;
  height: 64px;
  margin-top: 7px;
  padding: 11px 0 0 32px;
  border: 2px solid #ccc;
  border-radius: 8px;
  background: #fff;
  letter-spacing: -0.05px;
}
.box.input { padding-left: 24px; }
.track {
  position: relative;
  box-sizing: border-box;
  width: 600px;
  height: 20px;
  margin-top: 17px;
  border: 2px solid #d3d3d3;
  border-radius: 8px;
  background: #fafafa;
  box-shadow: inset 0 2px 4px #f0f0f0;
}
.done {
  width: 121px;
  height: 16px;
  border-radius: 6px;
  background: #e6e6e6;
}
.knob {
  position: absolute;
  box-sizing: border-box;
  left: 107px;
  top: -10px;
  width: 28px;
  height: 36px;
  border: 2px solid #d9d9d9;
  border-radius: 6px;
  background: #fff;
  box-shadow: inset 0 0 10px #ebebeb, 0 6px 12px -4px #bbb;
}
.rule {
  width: 494px;
  height: 2px;
  margin-top: 31px;
  background: #555;
  border-bottom: 2px solid #808080;
}
h2 {
  margin: 60px 0 43px;
  font-size: 39px;
  line-height: 44px;
}
h3 {
  margin: 0 0 39px;
  font-size: 30.4px;
  line-height: 34px;
  letter-spacing: 0;
}
p {
  margin: 0 0 34px;
}
.gutter {
  flex: none;
  box-sizing: border-box;
  width: 18px;
  padding: 5px 0 0 5px;
  background: #eff0f1;
  border-right: 2px solid #d8d9da;
}
.thumb {
  width: 6px;
  height: 1378px;
  border-radius: 3px;
  background: #8a8d8d;
}
.main {
  flex: none;
  box-sizing: border-box;
  width: 2384px;
  padding-left: 34px;
  overflow: hidden;
  background: #fff;
}
.card {
  width: 2298px;
  background: #fff;
  box-shadow: 0 2px 3px rgba(0, 0, 0, 0.38), 0 1px 5px rgba(0, 0, 0, 0.12);
}
.map-card {
  height: 786px;
  margin-top: -12px;
}
.series-card {
  height: 800px;
  margin-top: 40px;
}
.card-head {
  box-sizing: border-box;
  height: 82px;
  padding: 17px 24px 0 0;
  display: flex;
  justify-content: flex-end;
  background: #f7f7f7;
  border-radius: 8px;
}
.title {
  flex: 1;
  padding-left: 28px;
  margin-right: -21px;
  text-align: center;
  font-size: 36.4px;
  font-weight: bold;
  line-height: 42px;
}
.minus {
  width: 21px;
  height: 5px;
  margin-top: 22px;
  background: #2c2c2b;
}
.map { display: block; }
.region {
  stroke: rgba(255, 255, 255, 0.18);
  stroke-width: 2.5;
  stroke-linejoin: round;
}
.limits {
  fill: none;
  stroke: rgba(255, 255, 255, 0.22);
  stroke-width: 3;
}
.axis-title {
  font-size: 22px;
  font-weight: bold;
  letter-spacing: 0.15px;
  fill: #000;
  text-rendering: geometricPrecision;
}
.tick {
  font-size: 20px;
  letter-spacing: 0.6px;
  fill: #000;
  text-rendering: geometricPrecision;
}
.charts {
  display: flex;
  gap: 10px;
  padding: 16px 0 0 86px;
}
.charts svg { flex: none; }
.page-scroll {
  flex: none;
  box-sizing: border-box;
  width: 10px;
  padding: 713px 0 0 5px;
  background: #eff0f1;
}
.page-thumb {
  height: 357px;
  border-radius: 3px 0 0 3px;
  background: #8a8d8d;
}
</style>
